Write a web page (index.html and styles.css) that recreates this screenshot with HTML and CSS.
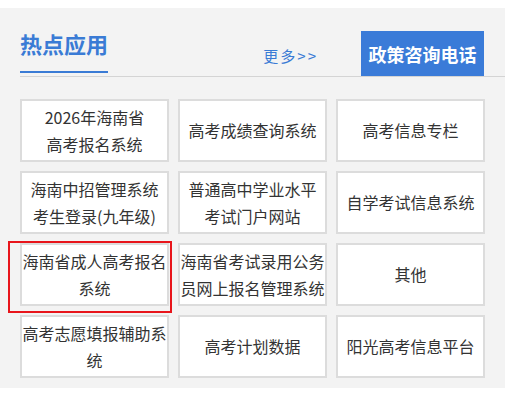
FILE: index.html
```html
<!DOCTYPE html>
<html lang="zh-CN">
<head>
<meta charset="utf-8">
<title>热点应用</title>
<link rel="stylesheet" href="styles.css">
</head>
<body>
<div class="panel">
  <div class="header">
    <div class="title">热点应用</div>
    <a class="more" href="#">更多&gt;&gt;</a>
    <div class="hotline">政策咨询电话</div>
  </div>
  <div class="grid">
    <a class="cell" href="#">2026年海南省<br>高考报名系统</a>
    <a class="cell" href="#">高考成绩查询系统</a>
    <a class="cell" href="#">高考信息专栏</a>
    <a class="cell" href="#">海南中招管理系统<br>考生登录(九年级)</a>
    <a class="cell" href="#">普通高中学业水平<br>考试门户网站</a>
    <a class="cell" href="#">自学考试信息系统</a>
    <a class="cell" href="#">海南省成人高考报名<br>系统</a>
    <a class="cell" href="#">海南省考试录用公务<br>员网上报名管理系统</a>
    <a class="cell" href="#">其他</a>
    <a class="cell" href="#">高考志愿填报辅助系<br>统</a>
    <a class="cell" href="#">高考计划数据</a>
    <a class="cell" href="#">阳光高考信息平台</a>
  </div>
  <div class="highlight"></div>
</div>
</body>
</html>
```
FILE: styles.css
```css
html, body {
  margin: 0;
  padding: 0;
  background: #ffffff;
  overflow: hidden;
}
body {
  padding-top: 8px;
  font-family: "Noto Sans CJK SC", "Noto Sans", sans-serif;
}
.panel {
  position: relative;
  background: #f3f3f3;
  padding: 23px 0 10px 20px;
}
.header {
  display: flex;
  height: 45px;
  border-bottom: 1px solid #d4d4d4;
  padding-right: 21px;
}
.title {
  align-self: flex-start;
  font-size: 22px;
  font-weight: bold;
  line-height: 25px;
  color: #3a7bd5;
  padding-bottom: 15px;
  border-bottom: 2px solid #3a7bd5;
}
.more {
  align-self: flex-end;
  margin-left: auto;
  margin-right: 43px;
  margin-bottom: 10px;
  font-size: 15px;
  line-height: 20px;
  color: #3a7bd5;
  text-decoration: none;
  letter-spacing: 2px;
}
.hotline {
  width: 123px;
  height: 45px;
  background: #3a7bd8;
  color: #ffffff;
  font-size: 18px;
  font-weight: bold;
  display: flex;
  align-items: center;
  justify-content: center;
}
.grid {
  display: grid;
  grid-template-columns: repeat(3, 149px);
  grid-auto-rows: 63px;
  column-gap: 9px;
  row-gap: 9px;
  margin-top: 22px;
}
.cell {
  box-sizing: border-box;
  background: #ffffff;
  border: 2px solid #dcdcdc;
  display: flex;
  align-items: center;
  justify-content: center;
  text-align: center;
  font-size: 16px;
  line-height: 27px;
  color: #333333;
  text-decoration: none;
  white-space: nowrap;
}
.highlight {
  position: absolute;
  left: 8px;
  top: 233px;
  width: 160px;
  height: 68px;
  border: 2px solid #e8151b;
  pointer-events: none;
}
```
